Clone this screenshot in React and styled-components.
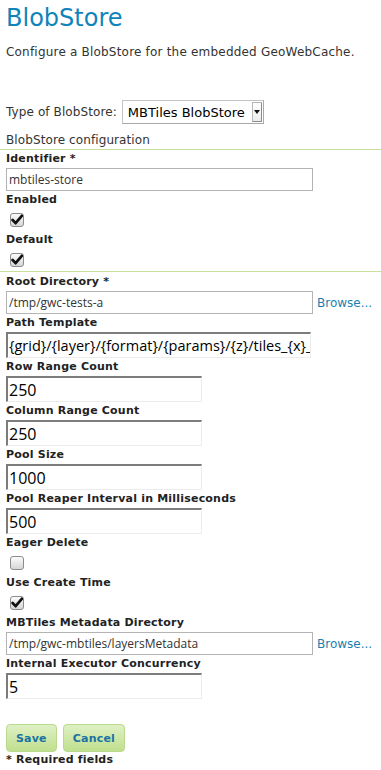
import React from "react";
import styled, { createGlobalStyle } from "styled-components";

const Global = createGlobalStyle`
  html, body { margin: 0; padding: 0; background: #fff; }
  body {
    font-family: "DejaVu Sans", "Liberation Sans", sans-serif;
    color: #333;
    font-size: 12px;
  }
  * { box-sizing: border-box; }
`;

const Page = styled.div`
  width: 381px;
  padding-bottom: 10px;
`;

const Padded = styled.div`
  padding: 0 6px;
`;

const Title = styled.h1`
  margin: 4px 0 0;
  font-size: 24px;
  line-height: 28px;
  font-weight: normal;
  color: #0f84bb;
`;

const Description = styled.p`
  margin: 11px 0 0;
  font-size: 12px;
  line-height: 18px;
  letter-spacing: 0.2px;
  color: #333;
`;

const TypeRow = styled.div`
  margin-top: 39px;
  display: flex;
  align-items: center;
  gap: 5px;
  height: 24px;
  color: #333;
  letter-spacing: 0.1px;
`;

const SelectBox = styled.div`
  width: 142px;
  height: 24px;
  border: 1px solid #c4c4c4;
  border-right-color: #a9a9a9;
  border-bottom-color: #a9a9a9;
  background: #fff;
  display: flex;
  align-items: center;
  justify-content: space-between;
  padding: 0 1px 0 5px;
`;

const SelectValue = styled.span`
  font-size: 13px;
  color: #000;
  white-space: nowrap;
  letter-spacing: 0;
`;

const ArrowButton = styled.span`
  width: 10px;
  height: 20px;
  border: 1px solid #b8b8b8;
  border-right-color: #8a8a8a;
  border-bottom-color: #8a8a8a;
  background: linear-gradient(#ffffff, #ececec);
  display: flex;
  align-items: center;
  justify-content: center;
`;

const Legend = styled.div`
  margin-top: 7px;
  padding: 0 6px;
  font-size: 12px;
  line-height: 18px;
  letter-spacing: 0.1px;
  color: #333;
  border-bottom: 1px solid #c6df9b;
`;

const Section = styled.div`
  padding: ${(p) => (p.$top ? "1px" : "0")} 6px 0;
  border-bottom: ${(p) => (p.$line ? "1px solid #c6df9b" : "none")};
`;

const Label = styled.div`
  font-size: 11px;
  line-height: 18px;
  font-weight: bold;
  letter-spacing: 0.2px;
  color: #222;
  white-space: nowrap;
`;

const FieldRow = styled.div`
  display: flex;
  align-items: center;
`;

const TextInput = styled.input`
  display: block;
  width: ${(p) => p.$w || 307}px;
  height: 23px;
  margin: 0;
  padding: 0 2px;
  border: 1px solid #b4b4b4;
  background: #fff;
  font-family: "Open Sans", "Noto Sans", sans-serif;
  font-size: 12px;
  color: #333;
  outline: none;
`;

const InsetInput = styled.input`
  display: block;
  width: ${(p) => p.$w || 196}px;
  height: 26px;
  margin: 0;
  padding: 0 0 0 1px;
  border-style: solid;
  border-width: 2px 1px 1px 2px;
  border-color: #7c7c7c #ececec #ececec #7c7c7c;
  background: #fff;
  font-family: "Open Sans", "Noto Sans", sans-serif;
  font-size: ${(p) => p.$fs || 16}px;
  color: #000;
  outline: none;
`;

const BrowseLink = styled.a`
  margin-left: 4px;
  font-size: 12px;
  color: #1a7fb0;
  text-decoration: none;
  white-space: nowrap;
`;

const CheckRow = styled.div`
  height: 22px;
  padding: 4px 0 0 4px;
`;

const CheckBox = styled.span`
  display: flex;
  align-items: center;
  justify-content: center;
  width: 14px;
  height: 14px;
  border: 1px solid #8c8c8c;
  border-radius: 3px;
  background: linear-gradient(#fbfbfb, #d6d6d6);
`;

const Buttons = styled.div`
  margin-top: 25px;
  display: flex;
  gap: 6px;
`;

const Button = styled.button`
  height: 28px;
  padding: 0 9px;
  margin: 0;
  border: 1px solid #b9d98f;
  border-radius: 4px;
  background: linear-gradient(#dff0c4, #c0df8e);
  font-family: "DejaVu Sans", sans-serif;
  font-size: 11px;
  font-weight: bold;
  letter-spacing: 0.2px;
  color: #1b72a2;
  cursor: pointer;
`;

const Required = styled.div`
  font-size: 11px;
  line-height: 16px;
  font-weight: bold;
  letter-spacing: 0.2px;
  color: #222;
`;

function Check({ checked }) {
  return (
    <CheckRow>
      <CheckBox>
        {checked && (
          <svg width="12" height="12" viewBox="0 0 12 12">
            <path d="M1.6 6 L4.6 9.2 L10.8 1.8" fill="none" stroke="#111" strokeWidth="2.7" strokeLinecap="round" strokeLinejoin="round" />
          </svg>
        )}
      </CheckBox>
    </CheckRow>
  );
}

function Num({ label, value }) {
  return (
    <>
      <Label>{label}</Label>
      <InsetInput defaultValue={value} />
    </>
  );
}

export default function App() {
  return (
    <Page>
      <Global />
      <Padded>
        <Title>BlobStore</Title>
        <Description>Configure a BlobStore for the embedded GeoWebCache.</Description>
        <TypeRow>
          <span>Type of BlobStore:</span>
          <SelectBox>
            <SelectValue>MBTiles BlobStore</SelectValue>
            <ArrowButton>
              <svg width="6" height="4" viewBox="0 0 6 4">
                <path d="M0 0 L6 0 L3 4 Z" fill="#111" />
              </svg>
            </ArrowButton>
          </SelectBox>
        </TypeRow>
      </Padded>
      <Legend>BlobStore configuration</Legend>
      <Section $line>
        <Label>Identifier *</Label>
        <TextInput defaultValue="mbtiles-store" />
        <Label>Enabled</Label>
        <Check checked />
        <Label>Default</Label>
        <Check checked />
      </Section>
      <Section $top>
        <Label>Root Directory *</Label>
        <FieldRow>
          <TextInput defaultValue="/tmp/gwc-tests-a" />
          <BrowseLink href="#">Browse...</BrowseLink>
        </FieldRow>
        <Label>Path Template</Label>
        <InsetInput $w={305} $fs={14.5} defaultValue="{grid}/{layer}/{format}/{params}/{z}/tiles_{x}_{y}.sqlite" />
        <Num label="Row Range Count" value="250" />
        <Num label="Column Range Count" value="250" />
        <Num label="Pool Size" value="1000" />
        <Num label="Pool Reaper Interval in Milliseconds" value="500" />
        <Label>Eager Delete</Label>
        <Check />
        <Label>Use Create Time</Label>
        <Check checked />
        <Label>MBTiles Metadata Directory</Label>
        <FieldRow>
          <TextInput defaultValue="/tmp/gwc-mbtiles/layersMetadata" />
          <BrowseLink href="#">Browse...</BrowseLink>
        </FieldRow>
        <Num label="Internal Executor Concurrency" value="5" />
        <Buttons>
          <Button>Save</Button>
          <Button>Cancel</Button>
        </Buttons>
        <Required>* Required fields</Required>
      </Section>
    </Page>
  );
}
